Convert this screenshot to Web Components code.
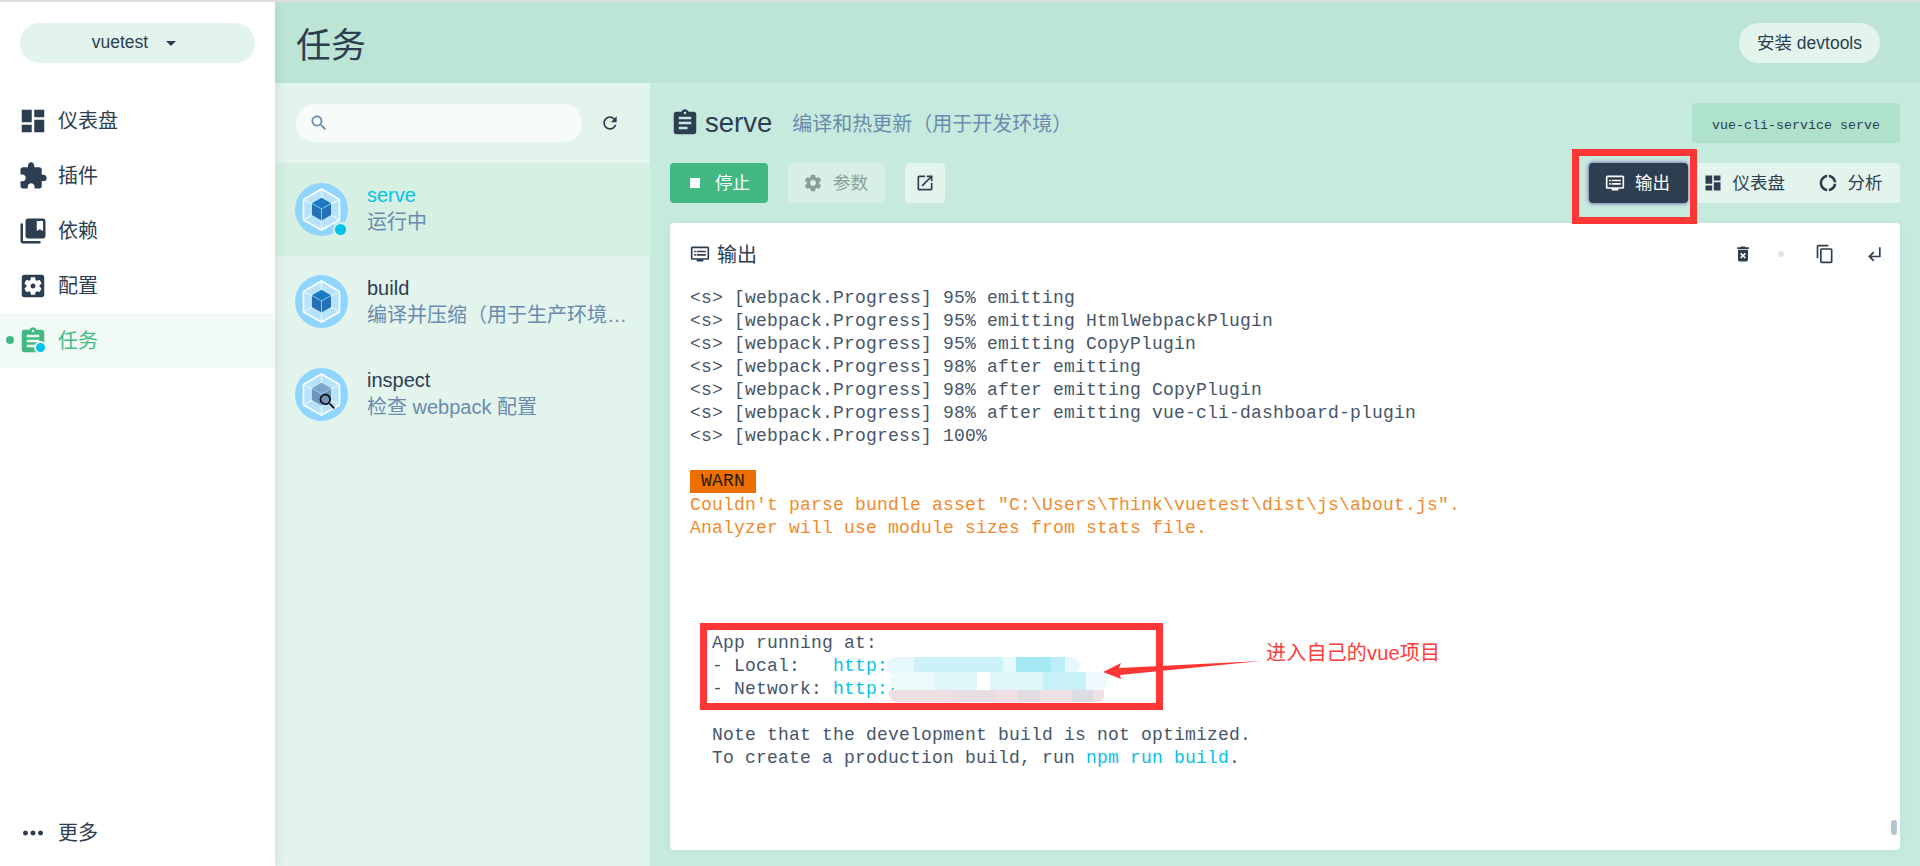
<!DOCTYPE html>
<html lang="zh">
  <head>
    <meta charset="utf-8" />
    <title>任务 - Vue CLI</title>
    <style>
      html,
      body {
        margin: 0;
        height: 866px;
        overflow: hidden;
      }
      body {
        position: relative;
        font: 20px "Liberation Sans", "Noto Sans CJK SC", sans-serif;
        color: #2c3e50;
        background: #fff;
      }
    </style>
  </head>

  <body>
    <app-shell>
      <side-bar slot="side">
        <project-switch slot="top">vuetest</project-switch>
        <nav-item icon="dashboard">仪表盘</nav-item>
        <nav-item icon="extension">插件</nav-item>
        <nav-item icon="bookmarks">依赖</nav-item>
        <nav-item icon="config">配置</nav-item>
        <nav-item icon="assignment" active>任务</nav-item>
        <nav-item slot="bottom" icon="more">更多</nav-item>
      </side-bar>

      <top-bar slot="top">
        任务
        <pill-button slot="actions">安装 devtools</pill-button>
      </top-bar>

      <task-list slot="list">
        <task-item name="serve" desc="运行中" selected running></task-item>
        <task-item name="build" desc="编译并压缩（用于生产环境）&#160;"></task-item>
        <task-item name="inspect" desc="检查 webpack 配置" inspect></task-item>
      </task-list>

      <task-panel slot="panel">
        <panel-title slot="title" name="serve" desc="编译和热更新（用于开发环境）"></panel-title>
        <command-box slot="command">vue-cli-service serve</command-box>

        <ui-button slot="actions" icon="stop" kind="primary">停止</ui-button>
        <ui-button slot="actions" icon="settings" kind="disabled">参数</ui-button>
        <ui-button slot="actions" icon="open" kind="light"></ui-button>

        <ui-button slot="views" icon="dvr" kind="dark">输出</ui-button>
        <ui-button slot="views" icon="dashboard" kind="flat">仪表盘</ui-button>
        <ui-button slot="views" icon="donut" kind="flat">分析</ui-button>

        <term-card slot="output">
          <term-line>&lt;s&gt; [webpack.Progress] 95% emitting</term-line>
          <term-line>&lt;s&gt; [webpack.Progress] 95% emitting HtmlWebpackPlugin</term-line>
          <term-line>&lt;s&gt; [webpack.Progress] 95% emitting CopyPlugin</term-line>
          <term-line>&lt;s&gt; [webpack.Progress] 98% after emitting</term-line>
          <term-line>&lt;s&gt; [webpack.Progress] 98% after emitting CopyPlugin</term-line>
          <term-line>&lt;s&gt; [webpack.Progress] 98% after emitting vue-cli-dashboard-plugin</term-line>
          <term-line>&lt;s&gt; [webpack.Progress] 100%</term-line>
          <term-line></term-line>
          <term-line><term-badge> WARN </term-badge></term-line>
          <term-line kind="warn">Couldn't parse bundle asset "C:\Users\Think\vuetest\dist\js\about.js".</term-line>
          <term-line kind="warn">Analyzer will use module sizes from stats file.</term-line>
          <term-line></term-line>
          <term-line></term-line>
          <term-line></term-line>
          <term-line></term-line>
          <term-line>  App running at:</term-line>
          <term-line>  - Local:   <term-link>http:/</term-link></term-line>
          <term-line>  - Network: <term-link>http:/</term-link></term-line>
          <term-line></term-line>
          <term-line>  Note that the development build is not optimized.</term-line>
          <term-line>  To create a production build, run <term-link>npm run build</term-link>.</term-line>
        </term-card>
      </task-panel>
    </app-shell>

    <!-- hand drawn notes on top of the screenshot -->
    <blur-patch kind="local"></blur-patch>
    <blur-patch kind="network"></blur-patch>
    <red-frame style="left: 1572px; top: 149px; width: 125px; height: 75px"></red-frame>
    <red-frame style="left: 700px; top: 623px; width: 463px; height: 87px"></red-frame>
    <red-note>进入自己的vue项目</red-note>

    <script>
      const ICONS = {
        dashboard: "M3 13h8V3H3v10zm0 8h8v-6H3v6zm10 0h8V11h-8v10zm0-18v6h8V3h-8z",
        extension:
          "M20.5 11H19V7c0-1.1-.9-2-2-2h-4V3.5C13 2.12 11.88 1 10.5 1S8 2.12 8 3.5V5H4c-1.1 0-1.99.9-1.99 2v3.8H3.5c1.49 0 2.7 1.21 2.7 2.7s-1.21 2.7-2.7 2.7H2V20c0 1.1.9 2 2 2h3.8v-1.5c0-1.49 1.21-2.7 2.7-2.7 1.49 0 2.7 1.21 2.7 2.7V22H17c1.1 0 2-.9 2-2v-4h1.5c1.38 0 2.5-1.12 2.5-2.5S21.88 11 20.5 11z",
        bookmarks:
          "M4 6H2v14c0 1.1.9 2 2 2h14v-2H4V6zm16-4H8c-1.1 0-2 .9-2 2v12c0 1.1.9 2 2 2h12c1.1 0 2-.9 2-2V4c0-1.1-.9-2-2-2zm0 10l-2.5-1.5L15 12V4h5v8z",
        config:
          "M12 10c-1.1 0-2 .9-2 2s.9 2 2 2 2-.9 2-2-.9-2-2-2zm7-7H5c-1.11 0-2 .9-2 2v14c0 1.1.89 2 2 2h14c1.11 0 2-.9 2-2V5c0-1.1-.89-2-2-2zm-1.75 9c0 .23-.02.46-.05.68l1.48 1.16c.13.11.17.3.08.45l-1.4 2.42c-.09.15-.27.21-.43.15l-1.74-.7c-.36.28-.76.51-1.18.69l-.26 1.85c-.03.17-.18.3-.35.3h-2.8c-.17 0-.32-.13-.35-.29l-.26-1.85c-.43-.18-.82-.41-1.18-.69l-1.74.7c-.16.06-.34 0-.43-.15l-1.4-2.42c-.09-.15-.05-.34.08-.45l1.48-1.16c-.03-.23-.05-.46-.05-.69 0-.23.02-.46.05-.68l-1.48-1.16c-.13-.11-.17-.3-.08-.45l1.4-2.42c.09-.15.27-.21.43-.15l1.74.7c.36-.28.76-.51 1.18-.69l.26-1.85c.03-.17.18-.3.35-.3h2.8c.17 0 .32.13.35.29l.26 1.85c.43.18.82.41 1.18.69l1.74-.7c.16-.06.34 0 .43.15l1.4 2.42c.09.15.05.34-.08.45l-1.48 1.16c.03.23.05.46.05.69z",
        assignment:
          "M19 3h-4.18C14.4 1.84 13.3 1 12 1c-1.3 0-2.4.84-2.82 2H5c-1.1 0-2 .9-2 2v14c0 1.1.9 2 2 2h14c1.1 0 2-.9 2-2V5c0-1.1-.9-2-2-2zm-7 0c.55 0 1 .45 1 1s-.45 1-1 1-1-.45-1-1 .45-1 1-1zm2 14H7v-2h7v2zm3-4H7v-2h10v2zm0-4H7V7h10v2z",
        more: "M6 10c-1.1 0-2 .9-2 2s.9 2 2 2 2-.9 2-2-.9-2-2-2zm12 0c-1.1 0-2 .9-2 2s.9 2 2 2 2-.9 2-2-.9-2-2-2zm-6 0c-1.1 0-2 .9-2 2s.9 2 2 2 2-.9 2-2-.9-2-2-2z",
        search:
          "M15.5 14h-.79l-.28-.27C15.41 12.59 16 11.11 16 9.5 16 5.91 13.09 3 9.5 3S3 5.91 3 9.5 5.91 16 9.5 16c1.61 0 3.09-.59 4.23-1.57l.27.28v.79l5 4.99L20.49 19l-4.99-5zm-6 0C7.01 14 5 11.99 5 9.5S7.01 5 9.5 5 14 7.01 14 9.5 11.99 14 9.5 14z",
        refresh:
          "M17.65 6.35C16.2 4.9 14.21 4 12 4c-4.42 0-7.99 3.58-7.99 8s3.57 8 7.99 8c3.73 0 6.84-2.55 7.73-6h-2.08c-.82 2.33-3.04 4-5.65 4-3.31 0-6-2.69-6-6s2.69-6 6-6c1.66 0 3.14.69 4.22 1.78L13 11h7V4l-2.35 2.35z",
        stop: "M6 6h12v12H6z",
        settings:
          "M19.43 12.98c.04-.32.07-.64.07-.98s-.03-.66-.07-.98l2.11-1.65c.19-.15.24-.42.12-.64l-2-3.46c-.12-.22-.39-.3-.61-.22l-2.49 1c-.52-.4-1.08-.73-1.69-.98l-.38-2.65C14.46 2.18 14.25 2 14 2h-4c-.25 0-.46.18-.49.42l-.38 2.65c-.61.25-1.17.59-1.69.98l-2.49-1c-.23-.09-.49 0-.61.22l-2 3.46c-.13.22-.07.49.12.64l2.11 1.65c-.04.32-.07.65-.07.98s.03.66.07.98l-2.11 1.65c-.19.15-.24.42-.12.64l2 3.46c.12.22.39.3.61.22l2.49-1c.52.4 1.08.73 1.69.98l.38 2.65c.03.24.24.42.49.42h4c.25 0 .46-.18.49-.42l.38-2.65c.61-.25 1.17-.59 1.69-.98l2.49 1c.23.09.49 0 .61-.22l2-3.46c.12-.22.07-.49-.12-.64l-2.11-1.65zM12 15.5c-1.93 0-3.5-1.57-3.5-3.5s1.57-3.5 3.5-3.5 3.5 1.57 3.5 3.5-1.57 3.5-3.5 3.5z",
        open: "M19 19H5V5h7V3H5c-1.11 0-2 .9-2 2v14c0 1.1.89 2 2 2h14c1.1 0 2-.9 2-2v-7h-2v7zM14 3v2h3.59l-9.83 9.83 1.41 1.41L19 6.41V10h2V3h-7z",
        dvr: "M21 3H3c-1.1 0-2 .9-2 2v12c0 1.1.9 2 2 2h5v2h8v-2h5c1.1 0 1.99-.9 1.99-2L23 5c0-1.1-.9-2-2-2zm0 14H3V5h18v12zm-2-9H8v2h11V8zm0 4H8v2h11v-2zM7 8H5v2h2V8zm0 4H5v2h2v-2z",
        donut:
          "M11 5.08V2c-5 .5-9 4.81-9 10s4 9.5 9 10v-3.08c-3-.48-6-3.4-6-6.92s3-6.44 6-6.92zM18.97 11H22c-.47-5-4-8.53-9-9v3.08C16 5.51 18.54 8 18.97 11zM13 18.92V22c5-.47 8.53-4 9-9h-3.03c-.43 3-2.97 5.49-5.97 5.92z",
        trash:
          "M6 19c0 1.1.9 2 2 2h8c1.1 0 2-.9 2-2V7H6v12zm2.46-7.12l1.41-1.41L12 12.59l2.12-2.12 1.41 1.41L13.41 14l2.12 2.12-1.41 1.41L12 15.41l-2.12 2.12-1.41-1.41L10.59 14l-2.13-2.12zM15.5 4l-1-1h-5l-1 1H5v2h14V4z",
        copy: "M16 1H4c-1.1 0-2 .9-2 2v14h2V3h12V1zm3 4H8c-1.1 0-2 .9-2 2v14c0 1.1.9 2 2 2h11c1.1 0 2-.9 2-2V7c0-1.1-.9-2-2-2zm0 16H8V7h11v14z",
        enter: "M11 9l1.42 1.42L8.83 14H18V4h2v12H8.83l3.59 3.58L11 21l-6-6 6-6z",
        drop: "M7 10l5 5 5-5z",
      };

      // small helper, every element below has the same connectedCallback shape
      class Base extends HTMLElement {
        connectedCallback() {
          if (this.shadowRoot) return;
          this.attachShadow({ mode: "open" }).innerHTML = this.render();
        }
        attr(name) {
          return this.getAttribute(name) || "";
        }
      }

      class MIcon extends Base {
        render() {
          const size = this.attr("size") || 20;
          return `<style>
            :host { display: inline-flex; flex: none; width: ${size}px; height: ${size}px; }
            svg { width: 100%; height: 100%; fill: currentColor; display: block; }
          </style>
          <svg viewBox="0 0 24 24"><path d="${ICONS[this.attr("name")]}"></path></svg>`;
        }
      }

      class AppShell extends Base {
        render() {
          return `<style>
            :host { display: grid; grid-template-columns: 275px 1fr; grid-template-rows: 81px 1fr; height: 864px; border-top: 2px solid #dcdcdc; }
            .side { grid-row: 1 / 3; display: flex; position: relative; z-index: 2; box-shadow: 0 0 14px rgba(0,0,0,.1); clip-path: inset(0 -20px 0 0); }
            .top { display: block; }
            .body { display: grid; grid-template-columns: 375px 1fr; min-height: 0; }
          </style>
          <div class="side"><slot name="side"></slot></div>
          <div class="top"><slot name="top"></slot></div>
          <div class="body"><slot name="list"></slot><slot name="panel"></slot></div>`;
        }
      }

      class SideBar extends Base {
        render() {
          return `<style>
            :host { display: flex; flex-direction: column; flex: 1; background: #fff; }
            .top { padding: 21px 20px 30px; }
            .grow { flex: 1; }
            .bottom { padding-bottom: 6px; }
          </style>
          <div class="top"><slot name="top"></slot></div>
          <div class="grow"><slot></slot></div>
          <div class="bottom"><slot name="bottom"></slot></div>`;
        }
      }

      class ProjectSwitch extends Base {
        render() {
          return `<style>
            :host { display: flex; align-items: center; justify-content: center; gap: 11px; height: 40px; border-radius: 20px; background: #e3f4ed; font-size: 17.5px; }
            span { position: relative; top: -1px; }
          </style>
          <span><slot></slot></span><m-icon name="drop" size="24"></m-icon>`;
        }
      }

      class NavItem extends Base {
        render() {
          return `<style>
            :host { display: flex; align-items: center; gap: 10px; height: 55px; padding-left: 18px; position: relative; font-size: 20px; }
            :host([active]) { background: #f2faf6; color: #42b983; }
            .mark { position: absolute; left: 6px; top: 23px; width: 8px; height: 8px; border-radius: 50%; background: #42b983; }
            .badge { position: absolute; left: 36px; top: 30px; width: 9px; height: 9px; border-radius: 50%; background: #03c2e6; box-shadow: 0 0 0 2px #eef8f4; }
            .label { position: relative; top: -1px; }
          </style>
          ${this.hasAttribute("active") ? '<i class="mark"></i><i class="badge"></i>' : ""}
          <m-icon name="${this.attr("icon")}" size="30"></m-icon>
          <span class="label"><slot></slot></span>`;
        }
      }

      class TopBar extends Base {
        render() {
          return `<style>
            :host { display: flex; align-items: center; justify-content: space-between; height: 81px; padding: 0 40px 0 21px; box-sizing: border-box; background: #bce5d6; font-size: 35px; }
          </style>
          <span><slot></slot></span>
          <slot name="actions"></slot>`;
        }
      }

      class PillButton extends Base {
        render() {
          return `<style>
            :host { display: flex; align-items: center; height: 40px; padding: 0 18px; border-radius: 20px; background: #e3f4ed; font-size: 17.5px; }
            span { position: relative; top: -1px; }
          </style><span><slot></slot></span>`;
        }
      }

      class TaskList extends Base {
        render() {
          return `<style>
            :host { display: block; background: #e3f4ed; min-height: 0; }
            .search { display: flex; align-items: center; height: 80px; padding-left: 21px; }
            .input { display: flex; align-items: center; width: 273px; height: 38px; padding-left: 13px; border-radius: 19px; background: #f7fcfa; color: #6a8bad; }
            .refresh { margin-left: 18px; }
          </style>
          <div class="search">
            <div class="input"><m-icon name="search" size="20"></m-icon></div>
            <m-icon class="refresh" name="refresh" size="20"></m-icon>
          </div>
          <slot></slot>`;
        }
      }

      class WebpackLogo extends Base {
        render() {
          const inspect = this.hasAttribute("inspect");
          const cube = inspect ? "#7ea4c8" : "#1c78c0";
          const side = inspect ? "#6f95ba" : "#2470b5";
          return `<style>
            :host { display: block; width: 53px; height: 53px; flex: none; position: relative; }
            svg { display: block; }
            .dot { position: absolute; left: 40px; top: 41px; width: 11px; height: 11px; border-radius: 50%; background: #03c2e6; box-shadow: 0 0 0 2px #d7f0e4; }
            m-icon { position: absolute; left: 22px; top: 23px; color: #111; }
          </style>
          <svg width="53" height="53" viewBox="0 0 53 53">
            <circle cx="26.5" cy="26.5" r="26.5" fill="#90d5fd"></circle>
            <path d="M26.5 6 44.5 16.5V37L26.5 47 8.5 37V16.5Z" fill="#b7e2fb" stroke="#fff" stroke-width="1.6"></path>
            <path d="M26.5 6V15M44.5 16.5 36 21M44.5 37 36 32M26.5 47V37.5M8.5 37 17 32M8.5 16.5 17 21" stroke="#e8f6fe" stroke-width="1.3"></path>
            <path d="M26.5 15 36 20.5V32L26.5 37.5 17 32V20.5Z" fill="${side}"></path>
            <path d="M26.5 15 36 20.5 26.5 26 17 20.5Z" fill="${cube}"></path>
            <path d="M17 20.5 26.5 26 36 20.5M26.5 26V37.5" fill="none" stroke="#8ed6fb" stroke-width=".9"></path>
          </svg>
          ${this.hasAttribute("running") ? '<i class="dot"></i>' : ""}
          ${inspect ? '<m-icon name="search" size="21"></m-icon>' : ""}`;
        }
      }

      class TaskItem extends Base {
        render() {
          return `<style>
            :host { display: flex; align-items: center; gap: 19px; height: 92.5px; padding: 0 23px 0 20px; box-sizing: border-box; }
            :host([selected]) { background: #d7f0e4; }
            :host([selected]) .name { color: #03c2e6; }
            .text { min-width: 0; flex: 1; line-height: 27px; }
            .desc { color: #6a8bad; white-space: nowrap; overflow: hidden; text-overflow: ellipsis; }
          </style>
          <webpack-logo ${this.hasAttribute("running") ? "running" : ""} ${this.hasAttribute("inspect") ? "inspect" : ""}></webpack-logo>
          <div class="text">
            <div class="name">${this.attr("name")}</div>
            <div class="desc">${this.attr("desc")}</div>
          </div>`;
        }
      }

      class TaskPanel extends Base {
        render() {
          return `<style>
            :host { display: flex; flex-direction: column; gap: 20px; padding: 20px 20px 16px; background: #c7eade; min-height: 0; box-sizing: border-box; height: 783px; }
            .row { display: flex; justify-content: space-between; align-items: center; height: 40px; flex: none; }
            .group { display: flex; gap: 20px; }
            .views { display: flex; border-radius: 4px; background: #e3f4ed; }
            .out { flex: 1; display: flex; min-height: 0; }
          </style>
          <div class="row"><slot name="title"></slot><slot name="command"></slot></div>
          <div class="row">
            <div class="group"><slot name="actions"></slot></div>
            <div class="views"><slot name="views"></slot></div>
          </div>
          <div class="out"><slot name="output"></slot></div>`;
        }
      }

      class PanelTitle extends Base {
        render() {
          return `<style>
            :host { display: flex; align-items: center; }
            .name { font-size: 27.5px; margin-left: 5px; }
            .desc { margin-left: 20px; color: #6a8bad; font-size: 20px; position: relative; top: -1px; }
          </style>
          <m-icon name="assignment" size="30"></m-icon>
          <span class="name">${this.attr("name")}</span>
          <span class="desc">${this.attr("desc")}</span>`;
        }
      }

      class CommandBox extends Base {
        render() {
          return `<style>
            :host { display: flex; align-items: center; justify-content: center; width: 208px; height: 40px; padding-top: 4px; box-sizing: border-box; border-radius: 4px; background: #aee2cc; font: 13.33px "Liberation Mono", monospace; }
          </style><slot></slot>`;
        }
      }

      class UiButton extends Base {
        render() {
          const empty = !this.textContent.trim();
          return `<style>
            :host { display: inline-flex; align-items: center; gap: 10px; height: 40px; padding: ${empty ? "0 10px" : "0 17px 0 15px"}; box-sizing: border-box; border-radius: 4px; font-size: 17.5px; }
            :host([kind=primary]) { background: #42b983; color: #fff; padding-right: 18px; }
            :host([kind=disabled]) { background: #d7efe5; color: #8a9e9b; }
            :host([kind=light]) { background: #e3f4ed; }
            :host([kind=flat]) { padding-right: 17.5px; }
            :host([kind=dark]) { background: #2c3e50; color: #fff; box-shadow: 0 0 4px #5a3aa8; position: relative; padding: 0 17.5px 0 16px; }
            span { position: relative; top: -2px; }
          </style>
          <m-icon name="${this.attr("icon")}" size="20"></m-icon>${empty ? "" : "<span><slot></slot></span>"}`;
        }
      }

      class TermCard extends Base {
        render() {
          return `<style>
            :host { display: block; flex: 1; position: relative; background: #fff; border-radius: 4px; overflow: hidden; box-shadow: 0 0 12px rgba(0,0,0,.04); }
            header { display: flex; align-items: center; height: 62px; padding: 0 16px 0 20px; }
            .title { margin-left: 7px; flex: 1; position: relative; top: -1px; }
            .dot { width: 6px; height: 6px; margin: 0 31px 0 25px; border-radius: 50%; background: #dfe3e8; }
            .enter { margin-left: 29px; }
            .lines { padding: 2px 0 0 20px; font: 18px/23px "Liberation Mono", monospace; letter-spacing: .2px; color: #46566a; }
            .thumb { position: absolute; right: 3px; bottom: 15px; width: 6px; height: 15px; border-radius: 3px; background: #b4c6d2; }
          </style>
          <header>
            <m-icon name="dvr" size="20"></m-icon>
            <span class="title">输出</span>
            <m-icon name="trash" size="20"></m-icon>
            <i class="dot"></i>
            <m-icon name="copy" size="20"></m-icon>
            <m-icon class="enter" name="enter" size="20"></m-icon>
          </header>
          <div class="lines"><slot></slot></div>
          <i class="thumb"></i>`;
        }
      }

      class TermLine extends Base {
        render() {
          return `<style>
            :host { display: block; height: 23px; white-space: pre; }
            :host([kind=warn]) { color: #f08a2c; }
          </style><slot></slot>`;
        }
      }

      class TermLink extends Base {
        render() {
          return `<style>:host { color: #03c2e6; }</style><slot></slot>`;
        }
      }

      class TermBadge extends Base {
        render() {
          return `<style>:host { display: inline-block; height: 23px; background: #ec6f00; color: #2b1a05; position: relative; top: -1px; }</style><slot></slot>`;
        }
      }

      // the smudged out addresses
      class BlurPatch extends Base {
        render() {
          return `<style>
            :host { position: absolute; display: block; }
            :host([kind=local]) { left: 887px; top: 657px; width: 193px; height: 18px; border-radius: 9px;
              background: linear-gradient(90deg, #e6f8fc 0 14%, #cdf1f8 14% 60%, #e8f9fc 60% 67%, #a6e9f5 67% 85%, #bdeef7 85% 92%, #e6f8fc 92%); }
            :host([kind=network]) { left: 890px; top: 672px; width: 218px; height: 30px; }
            .a { height: 18px; border-radius: 9px;
              background: linear-gradient(90deg, #edfafc 0 20%, #dff6fa 20% 40%, #fff 40% 46%, #dff6fa 46% 70%, #c8f0f8 70% 90%, #eefafd 90%); }
            .b { height: 12px; border-radius: 0 0 6px 6px; margin-right: 4px;
              background: linear-gradient(90deg, #eedfe3 0 30%, #e8dde2 30% 50%, #f1e0e3 50% 60%, #e2dde3 60% 70%, #efe0e4 70% 85%, #dcdde3 85% 95%, #efe0e3 95%); }
          </style>
          ${this.attr("kind") === "network" ? '<div class="a"></div><div class="b"></div>' : ""}`;
        }
      }

      class RedFrame extends Base {
        render() {
          return `<style>
            :host { position: absolute; display: block; box-sizing: border-box; border: 7px solid #ff3636; }
          </style>`;
        }
      }

      class RedNote extends Base {
        render() {
          return `<style>
            :host { position: absolute; left: 1103px; top: 645px; display: flex; align-items: flex-start; color: #ff3b3b; font-size: 20px; line-height: 16px; letter-spacing: .2px; }
            svg { display: block; width: 163px; height: 36px; }
          </style>
          <svg viewBox="0 0 163 36"><path d="M0 27 18 18 16 23 158 16 17 30 18 34Z" fill="#ff3636"></path></svg>
          <span><slot></slot></span>`;
        }
      }

      const elements = {
        "m-icon": MIcon,
        "app-shell": AppShell,
        "side-bar": SideBar,
        "project-switch": ProjectSwitch,
        "nav-item": NavItem,
        "top-bar": TopBar,
        "pill-button": PillButton,
        "task-list": TaskList,
        "webpack-logo": WebpackLogo,
        "task-item": TaskItem,
        "task-panel": TaskPanel,
        "panel-title": PanelTitle,
        "command-box": CommandBox,
        "ui-button": UiButton,
        "term-card": TermCard,
        "term-line": TermLine,
        "term-link": TermLink,
        "term-badge": TermBadge,
        "blur-patch": BlurPatch,
        "red-frame": RedFrame,
        "red-note": RedNote,
      };
      for (const [name, cls] of Object.entries(elements)) {
        customElements.define(name, cls);
      }
    </script>
  </body>
</html>
